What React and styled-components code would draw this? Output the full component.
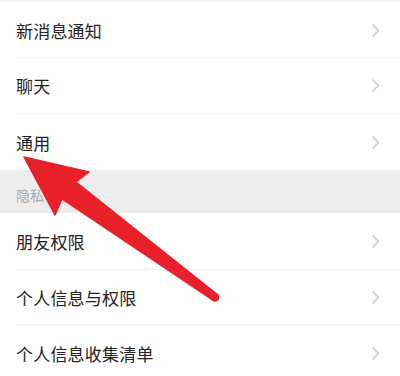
import styled, { createGlobalStyle } from "styled-components";

const Global = createGlobalStyle`
  html, body {
    margin: 0;
    padding: 0;
    background: #fff;
  }
  body {
    font-family: "Noto Sans CJK SC", "Noto Sans", sans-serif;
  }
`;

const Page = styled.div`
  position: relative;
  width: 400px;
  height: 376px;
  overflow: hidden;
  background: #fff;
  border-top: 2px solid #f4f4f4;
  box-sizing: border-box;
  padding-top: 1px;
`;

const Row = styled.div`
  display: flex;
  align-items: center;
  justify-content: space-between;
  height: ${(p) => p.$h || 56}px;
  margin-left: 16px;
  padding-right: 20px;
  box-sizing: border-box;
  border-bottom: ${(p) => (p.$last ? "none" : "1px solid #efefef")};
`;

const Label = styled.span`
  font-size: 17px;
  color: #222;
  letter-spacing: 0.2px;
`;

const Section = styled.div`
  display: flex;
  align-items: flex-end;
  height: 43px;
  padding: 0 0 8px 16px;
  box-sizing: border-box;
  background: #ededed;
  font-size: 14px;
  color: #a9a9a9;
`;

const Arrow = styled.svg`
  position: absolute;
  left: 0;
  top: 0;
  pointer-events: none;
`;

const Chevron = () => (
  <svg width="9" height="15" viewBox="0 0 9 15">
    <path d="M1.5 1.5 L7.5 7.5 L1.5 13.5" fill="none" stroke="#c2c2c2" strokeWidth="1.4" />
  </svg>
);

const Item = ({ text, h, last }) => (
  <Row $h={h} $last={last}>
    <Label>{text}</Label>
    <Chevron />
  </Row>
);

const App = () => {
  return (
    <>
      <Global />
      <Page>
        <Item text="新消息通知" h={55} />
        <Item text="聊天" h={56} />
        <Item text="通用" h={56} last />
        <Section>隐私</Section>
        <Item text="朋友权限" h={57} />
        <Item text="个人信息与权限" h={55} />
        <Item text="个人信息收集清单" h={56} last />
        <Arrow width="400" height="376" viewBox="0 0 400 376">
          <path
            d="M24 155 L89 170 L76 180 L218 293 Q220 299 214 299 L62 197 L55 213 Z"
            fill="#e8202a"
            stroke="#e8202a"
            strokeWidth="1.5"
            strokeLinejoin="round"
          />
        </Arrow>
      </Page>
    </>
  );
};

export default App;
